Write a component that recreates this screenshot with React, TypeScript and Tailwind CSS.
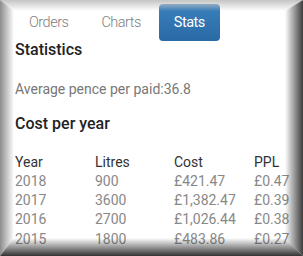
import React from 'react';

const rows = [
  { year: '2018', litres: '900', cost: '£421.47', ppl: '£0.47' },
  { year: '2017', litres: '3600', cost: '£1,382.47', ppl: '£0.39' },
  { year: '2016', litres: '2700', cost: '£1,026.44', ppl: '£0.38' },
  { year: '2015', litres: '1800', cost: '£483.86', ppl: '£0.27' },
];

/* Bevelled frame drawn over the page edges */
const Bevel: React.FC = () => (
  <>
    <div className="pointer-events-none absolute inset-x-0 top-0 h-[11px] bg-gradient-to-b from-[#c4c4c4] to-transparent [clip-path:polygon(0_0,100%_0,calc(100%-18px)_100%,14px_100%)]" />
    <div className="pointer-events-none absolute inset-y-0 left-0 w-[14px] bg-gradient-to-r from-[#8c8c8c] to-transparent [clip-path:polygon(0_0,100%_11px,100%_calc(100%-18px),0_100%)]" />
    <div className="pointer-events-none absolute inset-y-0 right-0 w-[18px] bg-gradient-to-l from-[#3c3c3c] to-transparent [clip-path:polygon(100%_0,100%_100%,0_calc(100%-18px),0_11px)]" />
    <div className="pointer-events-none absolute inset-x-0 bottom-0 h-[18px] bg-gradient-to-t from-[#333333] to-transparent [clip-path:polygon(0_100%,14px_0,calc(100%-18px)_0,100%_100%)]" />
  </>
);

export default function App() {
  return (
    <div className="relative h-[256px] w-[303px] overflow-hidden bg-white font-['Roboto',sans-serif] text-[14px] text-[#333]">
      <div className="pl-[14px] pt-[4px]">
        <nav className="flex gap-[3px] text-[14.5px] tracking-[-0.5px]">
          <a className="h-[37px] px-[15px] font-light leading-[37px] text-[#808080]">Orders</a>
          <a className="h-[37px] px-[15px] font-light leading-[37px] text-[#808080]">Charts</a>
          <a className="h-[37px] rounded-[4px] bg-gradient-to-b from-[#3a80bd] to-[#2a6aa4] px-[15px] leading-[37px] text-white">
            Stats
          </a>
        </nav>

        <div className="pl-[1px]">
          <h4 className="text-[16px] font-medium leading-[18px] text-[#222]">Statistics</h4>
          <p className="mt-[19.5px] leading-[20px] text-[#777]">Average pence per paid:36.8</p>

          <h4 className="mt-[16px] text-[16px] font-medium leading-[18px] text-[#222]">Cost per year</h4>

          <div className="mt-[20px] grid grid-cols-[80px_79px_80px_auto] leading-[19.3px]">
            <div className="text-[#333]">Year</div>
            <div className="text-[#333]">Litres</div>
            <div className="text-[#333]">Cost</div>
            <div className="text-[#333]">PPL</div>
            {rows.map((r) => (
              <React.Fragment key={r.year}>
                <div className="text-[#888]">{r.year}</div>
                <div className="text-[#888]">{r.litres}</div>
                <div className="text-[#888]">{r.cost}</div>
                <div className="text-[#888]">{r.ppl}</div>
              </React.Fragment>
            ))}
          </div>
        </div>
      </div>
      <Bevel />
    </div>
  );
}
